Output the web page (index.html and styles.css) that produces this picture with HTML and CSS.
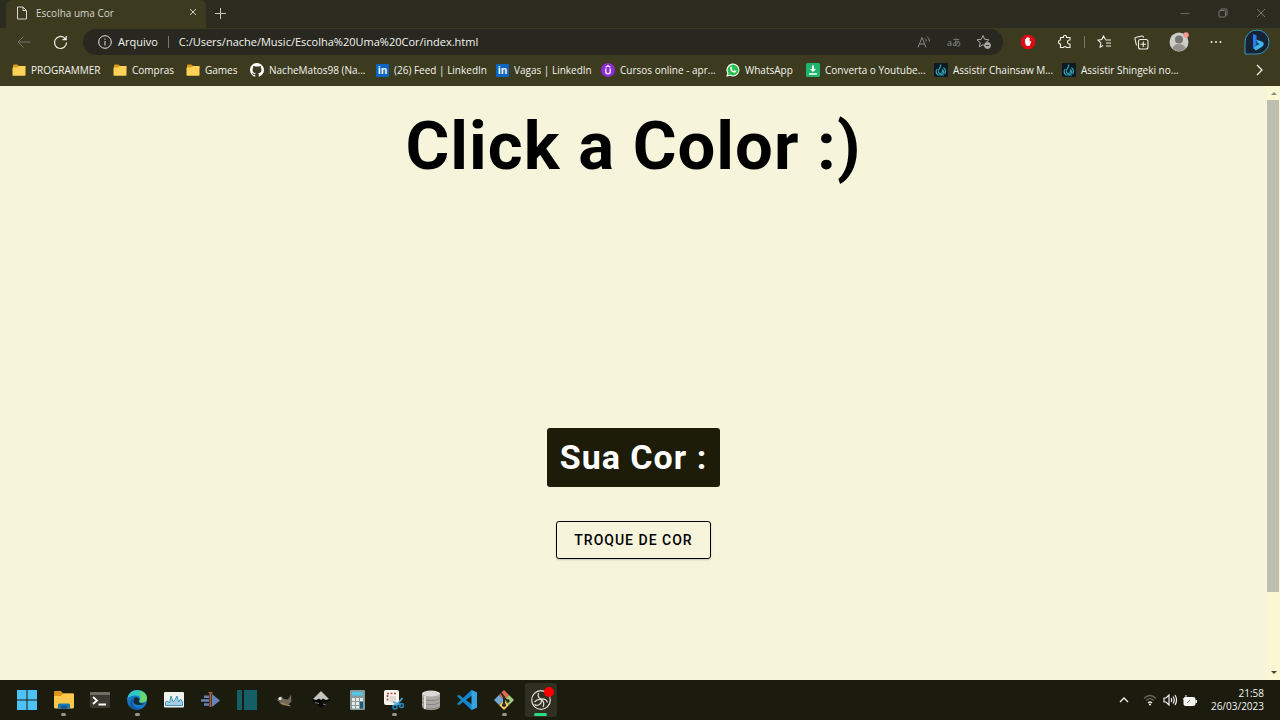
FILE: index.html
```html
<!DOCTYPE html>
<html lang="pt-BR">
<head>
<meta charset="utf-8">
<title>Escolha uma Cor</title>
<link rel="stylesheet" href="styles.css">
</head>
<body>
<svg class="defs" aria-hidden="true">
  <symbol id="folder" viewBox="0 0 14 14"><path d="M1 2.5q0-1 1-1h3.5L7 3h5.500q1 0 1 1v1H1z" fill="#d99a1c"/><path d="M.5 12V5q0-.5.500-.5H5L7 3h6q.5 0 .5.500V12q0 .8-.8.8H1.300q-.8 0-.8-.8z" fill="#ffd257"/></symbol>
  <symbol id="flame" viewBox="0 0 14 14"><rect width="14" height="14" rx="1" fill="#0c1a22"/><path d="M6.500 1.500C8 4.500 3 6 4.500 9.500q1.500 2 4 1Q11 9 8.500 7q.5 2-1 2.500M9.500 4.500Q13 8 10.500 11M3 6Q1 9.500 4 12h6" fill="none" stroke="#2aa5bd" stroke-width="1.200"/></symbol>
</svg>

<header class="browser">
  <div class="tabs">
    <div class="tab">
      <svg class="page-icon" viewBox="0 0 12 14" fill="none" stroke="#d8d8d0"><path d="M1.500 1h5.500l3.500 3.500V13h-9zM7 1v3.500h3.500"/></svg>
      <span class="tab-title">Escolha uma Cor</span>
      <button class="icon-btn small" aria-label="Fechar guia"><svg width="8" height="8" viewBox="0 0 8 8" stroke="#d0d0c8"><path d="M1 1l6 6M7 1L1 7"/></svg></button>
    </div>
    <button class="icon-btn new-tab" aria-label="Nova guia"><svg width="13" height="13" viewBox="0 0 13 13" stroke="#c8c8c0"><path d="M6.500 1v11M1 6.500h11"/></svg></button>
    <div class="window-controls">
      <button class="icon-btn" aria-label="Minimizar"><svg width="10" height="10" viewBox="0 0 10 10" stroke="#686860"><path d="M.5 5.500h9"/></svg></button>
      <button class="icon-btn" aria-label="Restaurar"><svg width="10" height="10" viewBox="0 0 10 10" fill="none" stroke="#777770"><rect x="1" y="2.500" width="6.500" height="6.500" rx="1"/><path d="M3 2V1h5q1 0 1 1v5h-1"/></svg></button>
      <button class="icon-btn" aria-label="Fechar"><svg width="10" height="10" viewBox="0 0 10 10" stroke="#777770"><path d="M1 1l8 8M9 1L1 9"/></svg></button>
    </div>
  </div>

  <div class="toolbar">
    <div class="nav">
      <button class="icon-btn" aria-label="Voltar"><svg width="14" height="14" viewBox="0 0 14 14" fill="none" stroke="#77776e"><path d="M13.500 7H1M6.500 1.500L1 7l5.500 5.500"/></svg></button>
      <button class="icon-btn" aria-label="Atualizar"><svg width="15" height="15" viewBox="0 0 15 15" fill="none" stroke="#f0f0ea" stroke-width="1.200"><path d="M13.500 7.500a6 6 0 1 1-2-4.500l1.500 1.500M13.200 1v3.700H9.500"/></svg></button>
    </div>
    <div class="address">
      <svg width="14" height="14" viewBox="0 0 14 14" fill="none" stroke="#e6e6e0"><circle cx="7" cy="7" r="6.300"/><path d="M7 6v4.500M7 3.500v1.200"/></svg>
      <label for="url">Arquivo</label>
      <span class="divider"></span>
      <input id="url" type="text" value="C:/Users/nache/Music/Escolha%20Uma%20Cor/index.html">
      <div class="address-tools">
        <button class="icon-btn" aria-label="Ler em voz alta"><svg width="14" height="14" viewBox="0 0 14 14" fill="none" stroke="#8a8a84"><path d="M1 12.500L5 2.500l4 10M2.500 9h5M8 3.500q1.300 1 1.300 3M10 1.500q2.500 1.700 2.500 5"/></svg></button>
        <button class="icon-btn" aria-label="Traduzir"><svg width="16" height="14" viewBox="0 0 16 14"><text x="1" y="11" class="glyph">a</text><text x="6" y="11" class="glyph">あ</text></svg></button>
        <button class="icon-btn" aria-label="Adicionar aos favoritos"><svg width="16" height="16" viewBox="0 0 16 16" fill="none" stroke="#a8a8a0"><path d="M7 1.500l1.700 3.800 4.200.5-3.100 2.800.8 4.200L7 10.700l-3.600 2.100.8-4.200L1 5.800l4.200-.5z"/><circle cx="11.500" cy="11.500" r="3" fill="#aaa" /><path d="M9.800 11.500h3.400" stroke="#333"/></svg></button>
      </div>
    </div>
    <div class="extensions">
      <button class="icon-btn" aria-label="Bloqueador"><svg width="14" height="14" viewBox="0 0 14 14"><path d="M4 0h6l4 4v6l-4 4H4l-4-4V4z" fill="#e30613"/><path d="M4 6.500V4.200q.5-.7 1 0V3q.6-.8 1.200 0v-.7q.7-.7 1.300 0V3q.6-.7 1.200 0v4l1-1q1 0 .5 1L8.500 11H5.700Q4 9.500 4 6.500z" fill="#fff"/></svg></button>
      <button class="icon-btn" aria-label="Extensões"><svg width="14" height="14" viewBox="0 0 14 14" fill="none" stroke="#eeeee8" stroke-width="1.100"><path d="M2.500 2.500h3q-.5-2 1.500-2t1.500 2h3.500V5q-2.500-.2-2.500 2t2.500 2v3.500H8.500q0-1-1.500-1t-1.500 1h-3V9Q.5 9 .5 7t2-2z"/></svg></button>
      <span class="divider short"></span>
      <button class="icon-btn" aria-label="Favoritos"><svg width="15" height="14" viewBox="0 0 15 14" fill="none" stroke="#eeeee8" stroke-width="1.100"><path d="M8.500 4.500L6.500 1 4.800 4.600 1 5.200l2.800 2.700-.7 4.300 3-1.700M8.500 5H14M9 8h5M9 11h5"/></svg></button>
      <button class="icon-btn" aria-label="Coleções"><svg width="15" height="15" viewBox="0 0 15 15" fill="none" stroke="#eeeee8" stroke-width="1.100"><rect x="4.500" y="4.500" width="9.500" height="9.500" rx="2"/><path d="M2.500 10.500L1 4q-.3-1.500 1.200-1.800L8 1q1.200-.2 1.700 1.500M9.250 6.500v5.500M6.500 9.250H12"/></svg></button>
      <button class="icon-btn" aria-label="Perfil"><svg width="20" height="20" viewBox="0 0 20 20"><circle cx="10" cy="10" r="9.500" fill="#cecdca"/><circle cx="10" cy="7.500" r="4" fill="#777771"/><path d="M3.500 16.500q1-4.500 6.500-4.500t6.500 4.500Q10 22 3.500 16.500z" fill="#92918c"/><circle cx="17" cy="3" r="2.800" fill="#f19b91"/></svg></button>
      <button class="icon-btn" aria-label="Configurações e mais"><svg width="12" height="4" viewBox="0 0 12 4" fill="#eeeee8"><circle cx="1.500" cy="2" r="1"/><circle cx="6" cy="2" r="1"/><circle cx="10.500" cy="2" r="1"/></svg></button>
      <button class="icon-btn bing" aria-label="Bing"><svg width="26" height="26" viewBox="0 0 26 26"><path d="M1 25V13A12 12 0 1 1 13 25z" fill="#152334" stroke="#3297bd"/><path d="M9 5l3.500 1.300v10L9 19z" fill="#2a79ec"/><path d="M9 19l3.500-2.500 3-1.500-2-1-1.300-3.500L19 13q1.800 2.500-.8 4.700L12 21.500z" fill="#3bb5ec"/></svg></button>
    </div>
  </div>

  <nav class="bookmarks" aria-label="Favoritos">
    <a href="#"><svg><use href="#folder"/></svg>PROGRAMMER</a>
    <a href="#"><svg><use href="#folder"/></svg>Compras</a>
    <a href="#"><svg><use href="#folder"/></svg>Games</a>
    <a href="#"><svg viewBox="0 0 16 16"><path fill="#fff" d="M8 0C3.580 0 0 3.580 0 8c0 3.540 2.290 6.530 5.470 7.590.4.070.55-.17.55-.38v-1.490c-2.230.48-2.700-.94-2.700-.94-.36-.92-.89-1.170-.89-1.170-.73-.5.060-.49.060-.49.8.060 1.230.83 1.230.83.71 1.220 1.870.87 2.330.66.070-.52.280-.87.500-1.070-1.780-.2-3.640-.89-3.640-3.950 0-.87.310-1.590.82-2.150-.08-.2-.36-1.020.08-2.120 0 0 .67-.21 2.200.82a7.700 7.700 0 0 1 4 0c1.530-1.040 2.200-.82 2.200-.82.44 1.100.16 1.920.08 2.120.51.560.82 1.270.82 2.150 0 3.070-1.870 3.750-3.650 3.950.29.250.54.730.54 1.480v2.190c0 .21.150.46.550.38A8 8 0 0 0 8 0z"/></svg>NacheMatos98 (Na...</a>
    <a href="#"><span class="linkedin" aria-hidden="true">in</span>(26) Feed | LinkedIn</a>
    <a href="#"><span class="linkedin" aria-hidden="true">in</span>Vagas | LinkedIn</a>
    <a href="#"><svg viewBox="0 0 14 14"><circle cx="7" cy="7" r="7" fill="#8f2bd8"/><path d="M4.800 5.500V9q0 1.800 2.200 1.800T9.200 9V5.500M4.600 4.300L7 2.800l2.400 1.500" fill="none" stroke="#fff" stroke-width="1.300"/></svg>Cursos online - apr...</a>
    <a href="#"><svg viewBox="0 0 14 14"><path d="M.3 13.700l1-3.600A6.500 6.500 0 1 1 4 12.700z" fill="#fff"/><path d="M1.800 12.200l.7-2.300A5.400 5.400 0 1 1 4.200 11.600z" fill="#27c24c"/><path d="M4.500 3.700l1-.2.8 1.700-.6.9q.8 1.400 2.200 2l.8-.8 1.700.8q0 1.700-1.900 1.700Q5 9.200 4 5.700q-.1-1.200.5-2z" fill="#fff"/></svg>WhatsApp</a>
    <a href="#"><svg viewBox="0 0 14 14"><rect width="14" height="14" rx="1.500" fill="#20b36a"/><path d="M6 2.500h2v3.500h2.200L7 9 3.800 6H6zM3 10.300h8v1.400H3z" fill="#fff"/></svg>Converta o Youtube...</a>
    <a href="#"><svg><use href="#flame"/></svg>Assistir Chainsaw M...</a>
    <a href="#"><svg><use href="#flame"/></svg>Assistir Shingeki no...</a>
    <button class="icon-btn more" aria-label="Mais favoritos"><svg width="7" height="12" viewBox="0 0 7 12" fill="none" stroke="#f2f2ec" stroke-width="1.300"><path d="M1 1l5 5-5 5"/></svg></button>
  </nav>
</header>

<div class="viewport">
  <main>
    <h1>Click a Color :)</h1>
    <div class="picker">
      <h2>Sua Cor :</h2>
      <button class="change">TROQUE DE COR</button>
    </div>
  </main>
  <div class="scrollbar" aria-hidden="true">
    <svg viewBox="0 0 8 5"><path d="M1 4l3-3 3 3z" fill="#8d8d87"/></svg>
    <div class="track"><div class="thumb"></div></div>
    <svg viewBox="0 0 8 5"><path d="M1 1l3 3 3-3z" fill="#444440"/></svg>
  </div>
</div>

<footer class="taskbar">
  <div class="apps">
    <button aria-label="Iniciar"><svg viewBox="0 0 20 20" fill="#4cc2f5"><path d="M0 0h9.500v9.500H0zM10.500 0H20v9.500h-9.500zM0 10.500h9.500V20H0zM10.500 10.500H20V20h-9.500z"/></svg></button>
    <button class="open" aria-label="Explorador de Arquivos"><svg viewBox="0 0 20 20"><path d="M0 2q0-1 1-1h6l2 2.500h10q1 0 1 1V8H0z" fill="#dc961a"/><path d="M0 6h7l2-2.500h10q1 0 1 1V17q0 1.500-1.500 1.500h-17Q0 18.500 0 17z" fill="#ffc74b"/><path d="M4 18.500V15q0-1.500 1.500-1.500h9q1.500 0 1.500 1.500v3.500z" fill="#1775b5"/><path d="M7 16h6v2.500H7z" fill="#0b578e"/></svg></button>
    <button aria-label="Terminal"><svg viewBox="0 0 20 20"><rect y="2" width="20" height="16" rx="1" fill="#393930"/><path d="M0 2h20v3H0z" fill="#6f6e64"/><path d="M3 7l4 3.500L3 14M8.500 14.500H16" fill="none" stroke="#fff" stroke-width="1.800"/></svg></button>
    <button class="open" aria-label="Microsoft Edge"><svg viewBox="0 0 20 20"><circle cx="10" cy="10" r="10" fill="#1679c5"/><path d="M.2 9Q2 0 10.500 0 20 .5 20 8.500q-.5 4-5 4-4 0-2-2.500 1-4-4-4.500Q3 5 .2 9z" fill="#35c7c5"/><path d="M12 1.500q8 1 8 7-.5 4-5 4-4 0-2-2.500 2-3-1-8.500z" fill="#6bd669"/><path d="M7.500 7.500Q3 13 8 17q4 3 9 .5-7 4.500-12 1Q-.5 12 7.500 7.500z" fill="#115aa2"/><path d="M7.500 7.500Q4 15 12 15q4 0 6.500-2-3 1-5 0-3-1-1-3-1-3.500-4.500-2.500z" fill="#142a32"/></svg></button>
    <button aria-label="Gerenciador de Tarefas"><svg viewBox="0 0 20 20"><rect y="2" width="20" height="15.500" rx="1" fill="#edf2ec"/><path d="M1.500 15.500V12l2-1 2 2 1.500-7 2 6 2-2 2-4 1.500 6 2-3 2 3v3.500z" fill="#a6cfdf" stroke="#4197bf"/></svg></button>
    <button aria-label="Depurador"><svg viewBox="0 0 20 20"><path d="M11 4l8 6.500-8 6.500zM3 5.500h5v2.500H3zM0 9.300h8v2.500H0zM3 13.200h5v2.500H3z" fill="#6685b6"/><path d="M7 2h5l-1.500 2v13H8.500V4z" fill="#a15e4a"/></svg></button>
    <button aria-label="Editor de blocos"><svg viewBox="0 0 20 20" fill="#145e66"><path d="M0 0h5v20H0zM7 0h13v20H7z"/></svg></button>
    <button aria-label="GIMP"><svg viewBox="0 0 20 20"><path d="M1 9l4-1 2-2 3 3 4 .500 3-5 .500 7-3 3 3 1.500-6-.5q-5 0-6.500-4z" fill="#71695a"/><circle cx="6" cy="8.500" r="1.500" fill="#eee"/><circle cx="3" cy="9" r="1" fill="#111"/><path d="M7 13l9 3" stroke="#b38d52"/></svg></button>
    <button aria-label="Inkscape"><svg viewBox="0 0 20 20"><path d="M10 1l8.500 8q1 2-2 2.500l-3.500.5q-.5 1.500 1.500 2.500l-4.500 3.500-4-3.500 2-1.500-5.500-1.500Q.5 10.500 2 9z" fill="#080808"/><path d="M10 1l8 8-3 1-3-1.500L10 10 8 8.500 5 10 2 9z" fill="#c5c5c0"/><path d="M4 12.500l4 1M12 14l3 1" stroke="#777"/></svg></button>
    <button aria-label="Calculadora"><svg viewBox="0 0 20 20"><rect x="3" width="15" height="20" rx="1" fill="#87999b"/><path d="M5 2h11v3.500H5z" fill="#54c7e9"/><path d="M5 8h3v3H5zM9 8h3v3H9zM5 12h3v3H5zM9 12h3v3H9zM5 16h3v2.500H5zM9 16h3v2.500H9zM13 8h3v3h-3z" fill="#e5ebea"/><path d="M13 12h3v6.500h-3z" fill="#185c82"/></svg></button>
    <button class="open" aria-label="Ferramenta de Captura"><svg viewBox="0 0 20 20"><rect width="15" height="15" rx="2" fill="#f6f5ee"/><path d="M3 3.500h9M3.500 5v7" fill="none" stroke="#c2423a" stroke-width="1.700" stroke-dasharray="2 1.500"/><path d="M5.500 6H12v6H5.500z" fill="#dedbd2"/><path d="M18.500 8l-6 7M9 12l8 3" stroke="#51a6ce" stroke-width="1.700"/><circle cx="11" cy="17" r="2" fill="none" stroke="#218bc5" stroke-width="1.500"/><circle cx="17.500" cy="15.500" r="2" fill="none" stroke="#218bc5" stroke-width="1.500"/></svg></button>
    <button aria-label="Banco de dados"><svg viewBox="0 0 20 20"><path d="M1 3v14q1.500 3 9 3t9-3V3z" fill="#aaa9a5"/><ellipse cx="10" cy="3.500" rx="9" ry="3" fill="#dad9d5"/><path d="M1 8q2 2.500 9 2.500T19 8M1 12q2 2.500 9 2.500t9-2.500M1 16q2 2.500 9 2.500t9-2.500" fill="none" stroke="#85857f"/><path d="M4 6v13" stroke="#deded9" stroke-width="2"/></svg></button>
    <button aria-label="Visual Studio Code"><svg viewBox="0 0 20 20"><path d="M14.500 0L20 2.500v15L14.500 20 6 12l-4 3.200L0 14l4-4-4-4 2-1.200L6 8zM15 5.500L9 10l6 4.500z" fill="#1686cb" fill-rule="evenodd"/><path d="M14.500 0L20 2.500v15L14.500 20z" fill="#35a2e3"/></svg></button>
    <button class="open" aria-label="Git Bash"><svg viewBox="0 0 20 20"><path d="M10 0l5 5-5 5-5-5z" fill="#e7694e"/><path d="M15 5l5 5-5 5-5-5z" fill="#a6ce78"/><path d="M5 5l5 5-5 5-5-5z" fill="#70a9d6"/><path d="M10 10l5 5-5 5-5-5z" fill="#f2c867"/><path d="M7 3l3 4v9M10 8l4 3" fill="none" stroke="#292922" stroke-width="2"/><circle cx="10" cy="15" r="2" fill="#292922"/><circle cx="14" cy="11" r="1.700" fill="#292922"/></svg></button>
    <button class="recording" aria-label="OBS Studio"><svg viewBox="0 0 20 20" fill="none" stroke="#e3e3dd" stroke-width="1.200"><circle cx="10" cy="10" r="9.300"/><path d="M7.500 3q-1.500 5 3 6 4.500-.5 6 3.500M10.500 9q.5 4.500-3 6-2.500.8-4-.5M10.500 9.500Q6 9 3.500 12M11 10q3 3 1 7"/></svg><span class="badge"></span></button>
  </div>
  <div class="tray">
    <button class="icon-btn" aria-label="Ícones ocultos"><svg width="10" height="6" viewBox="0 0 10 6" fill="none" stroke="#eee" stroke-width="1.300"><path d="M1 5l4-4 4 4"/></svg></button>
    <button class="icon-btn status" aria-label="Rede, som e bateria">
      <svg width="14" height="12" viewBox="0 0 14 12" fill="none" stroke="#66665d" stroke-width="1.200"><path d="M1 4.500q6-6 12 0M3 6.700q4-4 8 0"/><path d="M5 9q2-2 4 0" stroke="#e8e8e0"/><circle cx="7" cy="10.500" r="1" fill="#fff" stroke="none"/></svg>
      <svg width="14" height="12" viewBox="0 0 14 12" fill="none" stroke="#eee" stroke-width="1.200"><path d="M1 4h2l3-3v10L3 8H1zM8 4q1.500 2 0 4M10 2.500q2.500 3.500 0 7M12 1q3 5 0 10"/></svg>
      <svg width="14" height="13" viewBox="0 0 14 13"><rect x="1" y="3.500" width="11" height="8" rx="1.500" fill="#f2f2ec" stroke="#fff"/><path d="M12.500 6H14v3h-1.500z" fill="#fff"/><path d="M3 1v3M1 4h4v2q-2 2-4 0z" fill="#fff" stroke="#fff"/><path d="M4 9l3-3" stroke="#88887f"/></svg>
    </button>
    <time datetime="2023-03-26T21:58"><span>21:58</span><span>26/03/2023</span></time>
  </div>
</footer>
</body>
</html>
```

FILE: styles.css
```css
:root {
  --strip: #2b2b20;
  --chrome: #3c3b1f;
  --field: #282820;
  --page: #f6f5dc;
  --taskbar: #1b1b0e;
  --text: #f4f4ee;
}

* { box-sizing: border-box; }

body {
  margin: 0;
  height: 100vh;
  display: flex;
  flex-direction: column;
  overflow: hidden;
  background: var(--page);
  color: var(--text);
  font: 11px/16px "Open Sans", "Noto Sans", sans-serif;
}

.defs { display: none; }

svg { display: block; flex: none; }

button { font: inherit; cursor: pointer; }

.icon-btn {
  display: flex;
  align-items: center;
  justify-content: center;
  padding: 0;
  border: 0;
  background: none;
  color: inherit;
}

.glyph {
  font: 9px "Open Sans", "Noto Sans CJK JP", sans-serif;
  fill: #8a8a84;
}

/* Browser frame */
.browser { background: var(--chrome); }

.tabs {
  display: flex;
  height: 28px;
  padding-left: 6px;
  background: var(--strip);
}

.tabs .icon-btn,
.tab { padding-bottom: 2px; }

.tab {
  display: flex;
  align-items: center;
  width: 200px;
  padding-left: 10px;
  padding-right: 6px;
  border-radius: 6px 6px 0 0;
  background: var(--chrome);
}

.page-icon { width: 12px; height: 14px; margin-right: 8px; }
.tab-title { flex: 1; font-size: 10px; color: #d6d6ce; }
.small { width: 14px; height: 14px; }
.new-tab { width: 28px; }

.window-controls { display: flex; margin-left: auto; }
.window-controls .icon-btn { width: 38px; }

.toolbar {
  display: flex;
  align-items: center;
  height: 28px;
}

.nav { display: flex; padding-left: 5px; }
.nav .icon-btn { width: 37px; height: 26px; }

.address {
  flex: 1;
  display: flex;
  align-items: center;
  height: 26px;
  margin-left: 4px;
  padding: 0 4px 0 15px;
  border-radius: 13px;
  background: var(--field);
  font-size: 11px;
}

.address label { margin-left: 6px; }

.divider {
  width: 1px;
  height: 12px;
  margin: 0 10px;
  background: #77776f;
}

.divider.short { margin: 0 1px; }

.address input {
  flex: 1;
  min-width: 0;
  padding: 0;
  border: 0;
  outline: 0;
  background: none;
  color: inherit;
  font: inherit;
}

.address-tools { display: flex; }
.address-tools .icon-btn { width: 30px; height: 26px; }

.extensions {
  display: flex;
  align-items: center;
  padding-left: 6px;
}

.extensions .icon-btn { width: 37px; height: 28px; }
.extensions .bing { width: 46px; }

.bookmarks {
  display: grid;
  grid-template-columns: 101px 73px 64px 126px 120px 105px 125px 80px 128px 128px 1fr 42px;
  align-items: center;
  height: 30px;
  padding-left: 12px;
  padding-bottom: 2px;
  font-size: 10px;
}

.bookmarks a {
  display: flex;
  align-items: center;
  gap: 5px;
  color: inherit;
  text-decoration: none;
  white-space: nowrap;
}

.bookmarks a svg { width: 14px; height: 14px; }

.linkedin {
  width: 13px;
  height: 13px;
  border-radius: 1px;
  background: #0a66c2;
  font: bold 10px/13px "Open Sans", sans-serif;
  text-align: center;
}

/* Page */
.viewport {
  flex: 1;
  min-height: 0;
  display: flex;
}

main {
  flex: 1;
  display: flex;
  flex-direction: column;
  align-items: center;
  color: #000;
  font-family: Roboto, sans-serif;
}

h1 {
  margin: 20px 0 0;
  font-size: 67px;
  line-height: 80px;
  font-weight: 700;
  letter-spacing: 1px;
}

.picker {
  display: flex;
  flex-direction: column;
  align-items: center;
  gap: 34px;
  margin-top: 242px;
}

h2 {
  margin: 0;
  padding: 9px 13px 10px;
  border-radius: 3px;
  background: #1d1c08;
  color: #fff;
  font-size: 34px;
  line-height: 40px;
  font-weight: 700;
  letter-spacing: 1px;
}

.change {
  padding: 9px 17px;
  border: 1px solid #000;
  border-radius: 3px;
  background: transparent;
  box-shadow: 0 1px 2px #0003;
  color: #000;
  font: 500 14px/18px Roboto, sans-serif;
  letter-spacing: 1px;
}

.scrollbar {
  display: flex;
  flex-direction: column;
  align-items: center;
  gap: 4px;
  width: 13px;
  padding: 5px 0;
  background: #f9f8d3;
}

.scrollbar svg { width: 8px; height: 5px; }

.track { flex: 1; align-self: stretch; }
.thumb { height: 87%; background: #bdbdb2; margin-right: 1px; }

/* Taskbar */
.taskbar {
  display: flex;
  justify-content: space-between;
  align-items: center;
  height: 40px;
  padding: 0 16px 0 11px;
  background: var(--taskbar);
}

.apps {
  display: flex;
  justify-content: space-between;
  width: 546px;
}

.apps button {
  position: relative;
  display: flex;
  align-items: center;
  justify-content: center;
  width: 32px;
  height: 34px;
  padding: 0;
  border: 0;
  border-radius: 3px;
  background: none;
}

.apps svg { width: 20px; height: 20px; }

.open::after,
.recording::after {
  content: "";
  position: absolute;
  bottom: 1px;
  width: 5px;
  height: 3px;
  border-radius: 2px;
  background: #96968e;
}

.apps .recording { background: #303022; }
.recording::after { width: 13px; background: #2bdc82; }

.badge {
  position: absolute;
  top: 4px;
  right: 3px;
  width: 10px;
  height: 10px;
  border-radius: 50%;
  background: #f00;
}

.tray { display: flex; align-items: center; gap: 14px; }
.tray .icon-btn { height: 30px; }
.status { gap: 6px; }

time {
  display: flex;
  flex-direction: column;
  align-items: flex-end;
  font-size: 10px;
  line-height: 13px;
}
```
